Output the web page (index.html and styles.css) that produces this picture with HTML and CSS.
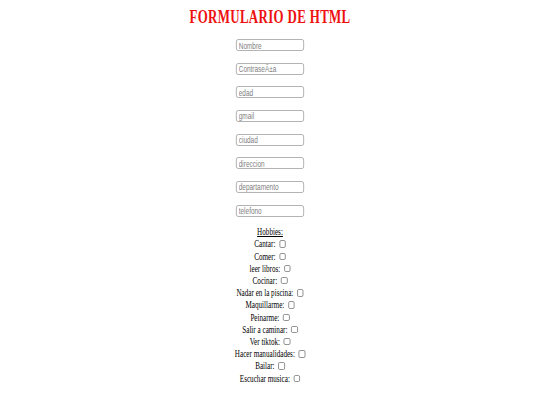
FILE: index.html
```html
<!DOCTYPE html>
<html lang="es">
<head>
<meta charset="utf-8">
<title>Formulario de HTML</title>
<link rel="stylesheet" href="styles.css">
</head>
<body>
<div class="page">
  <h1 class="title">FORMULARIO DE HTML</h1>
  <form class="form">
    <input class="field" type="text" placeholder="Nombre">
    <input class="field" type="password" placeholder="ContraseÃ±a">
    <input class="field" type="text" placeholder="edad">
    <input class="field" type="text" placeholder="gmail">
    <input class="field" type="text" placeholder="ciudad">
    <input class="field" type="text" placeholder="direccion">
    <input class="field" type="text" placeholder="departamento">
    <input class="field" type="text" placeholder="telefono">
    <div class="hobbies">
      <div class="hobbies-title">Hobbies:</div>
      <label class="hobby">Cantar: <input class="check" type="checkbox"></label>
      <label class="hobby">Comer: <input class="check" type="checkbox"></label>
      <label class="hobby">leer libros: <input class="check" type="checkbox"></label>
      <label class="hobby">Cocinar: <input class="check" type="checkbox"></label>
      <label class="hobby">Nadar en la piscina: <input class="check" type="checkbox"></label>
      <label class="hobby">Maquillarme: <input class="check" type="checkbox"></label>
      <label class="hobby">Peinarme: <input class="check" type="checkbox"></label>
      <label class="hobby">Salir a caminar: <input class="check" type="checkbox"></label>
      <label class="hobby">Ver tiktok: <input class="check" type="checkbox"></label>
      <label class="hobby">Hacer manualidades: <input class="check" type="checkbox"></label>
      <label class="hobby">Bailar: <input class="check" type="checkbox"></label>
      <label class="hobby">Escuchar musica: <input class="check" type="checkbox"></label>
    </div>
  </form>
</div>
</body>
</html>
```
FILE: styles.css
```css
html, body {
  margin: 0;
  padding: 0;
  background: #ffffff;
}

.page {
  width: 540px;
  transform: scaleX(0.68);
  transform-origin: 270px 0;
  font-family: "Liberation Serif", "Times New Roman", serif;
  color: #000;
  text-align: center;
}

.title {
  margin: 6px 0 0;
  font-size: 19px;
  line-height: 21px;
  font-weight: bold;
  letter-spacing: 0.5px;
  color: #ee1111;
}

.form {
  margin: 12px 0 0;
  display: flex;
  flex-direction: column;
  align-items: center;
  gap: 11.67px;
}

.field {
  box-sizing: border-box;
  width: 100px;
  height: 12px;
  margin: 0;
  padding: 0 3px;
  border: 1px solid #a4a4a4;
  border-radius: 3px;
  font-family: "Liberation Sans", Arial, sans-serif;
  font-size: 9.5px;
  line-height: 10px;
  background: #fff;
}

.field::placeholder {
  color: #808080;
}

.hobbies {
  margin-top: -2px;
  display: flex;
  flex-direction: column;
  align-items: center;
  font-size: 10.5px;
  line-height: 12.2px;
}

.hobbies-title {
  text-decoration: underline;
}

.hobby {
  display: flex;
  align-items: center;
  white-space: pre;
}

.check {
  appearance: none;
  -webkit-appearance: none;
  box-sizing: border-box;
  width: 9.5px;
  height: 7.5px;
  margin: 0 0 1px 3px;
  border: 1px solid #808080;
  border-radius: 2px;
  background: #fff;
}
```
